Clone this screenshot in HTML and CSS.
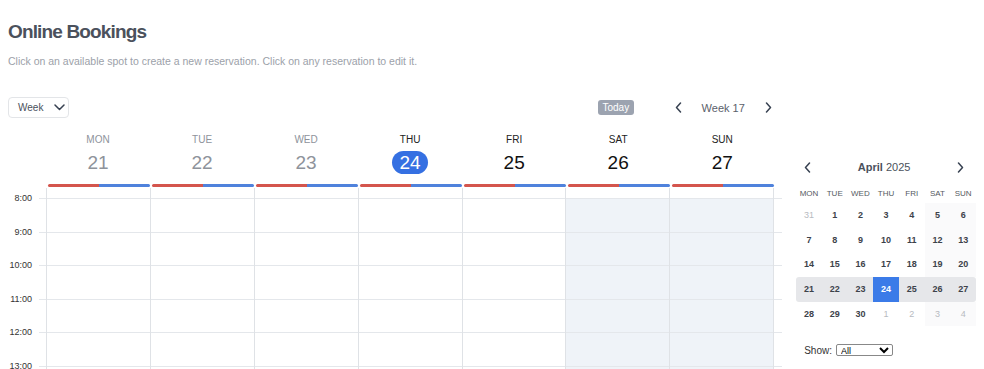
FILE: index.html
```html
<!doctype html>
<html>
<head>
  <link rel="stylesheet" href="styles.css">
</head>
<body>
<div class="b-page">
  <h1 class="b-page_title">Online Bookings</h1>
  <p class="b-page_hint">Click on an available spot to create a new reservation. Click on any reservation to edit it.</p>

  <div class="b-main">
    <div class="b-week">
      <div class="b-toolbar">
        <div class="b-toolbar_view">
          Week
          <svg width="11" height="7" viewBox="0 0 11 7"><path d="M1 1l4.5 4.5L10 1" fill="none" stroke="#374151" stroke-width="1.5" stroke-linecap="round" stroke-linejoin="round"/></svg>
        </div>
        <div class="b-toolbar_nav">
          <span class="b-toolbar_today">Today</span>
          <span class="b-toolbar_arrow">
            <svg width="7" height="11" viewBox="0 0 7 11"><path d="M5.5 1L1.5 5.5l4 4.5" fill="none" stroke="#374151" stroke-width="1.5" stroke-linecap="round" stroke-linejoin="round"/></svg>
          </span>
          <span class="b-toolbar_label">Week 17</span>
          <span class="b-toolbar_arrow">
            <svg width="7" height="11" viewBox="0 0 7 11"><path d="M1.5 1l4 4.5-4 4.5" fill="none" stroke="#374151" stroke-width="1.5" stroke-linecap="round" stroke-linejoin="round"/></svg>
          </span>
        </div>
      </div>

      <div class="b-days">
        <div class="b-days_gutter"></div>
        <div class="b-day past"><span class="b-day_name">MON</span><span class="b-day_num">21</span><span class="b-day_bar"><i></i><i></i></span></div>
        <div class="b-day past"><span class="b-day_name">TUE</span><span class="b-day_num">22</span><span class="b-day_bar"><i></i><i></i></span></div>
        <div class="b-day past"><span class="b-day_name">WED</span><span class="b-day_num">23</span><span class="b-day_bar"><i></i><i></i></span></div>
        <div class="b-day today"><span class="b-day_name">THU</span><span class="b-day_num">24</span><span class="b-day_bar"><i></i><i></i></span></div>
        <div class="b-day"><span class="b-day_name">FRI</span><span class="b-day_num">25</span><span class="b-day_bar"><i></i><i></i></span></div>
        <div class="b-day"><span class="b-day_name">SAT</span><span class="b-day_num">26</span><span class="b-day_bar"><i></i><i></i></span></div>
        <div class="b-day"><span class="b-day_name">SUN</span><span class="b-day_num">27</span><span class="b-day_bar"><i></i><i></i></span></div>
        <div class="b-days_tail"></div>
      </div>

      <div class="b-grid">
        <div class="b-grid_times">
          <div>8:00</div><div>9:00</div><div>10:00</div><div>11:00</div><div>12:00</div><div>13:00</div>
        </div>
        <div class="b-grid_col"><div class="b-grid_top"></div><i></i><i></i><i></i><i></i><i></i><i></i></div>
        <div class="b-grid_col"><div class="b-grid_top"></div><i></i><i></i><i></i><i></i><i></i><i></i></div>
        <div class="b-grid_col"><div class="b-grid_top"></div><i></i><i></i><i></i><i></i><i></i><i></i></div>
        <div class="b-grid_col"><div class="b-grid_top"></div><i></i><i></i><i></i><i></i><i></i><i></i></div>
        <div class="b-grid_col"><div class="b-grid_top"></div><i></i><i></i><i></i><i></i><i></i><i></i></div>
        <div class="b-grid_col weekend"><div class="b-grid_top"></div><i></i><i></i><i></i><i></i><i></i><i></i></div>
        <div class="b-grid_col weekend"><div class="b-grid_top"></div><i></i><i></i><i></i><i></i><i></i><i></i></div>
        <div class="b-grid_col tail"><div class="b-grid_top"></div><i></i><i></i><i></i><i></i><i></i><i></i></div>
      </div>
    </div>

    <div class="b-side">
      <div class="b-mini_head">
        <svg width="7" height="11" viewBox="0 0 7 11"><path d="M5.5 1L1.5 5.5l4 4.5" fill="none" stroke="#374151" stroke-width="1.5" stroke-linecap="round" stroke-linejoin="round"/></svg>
        <span><b>April</b> 2025</span>
        <svg width="7" height="11" viewBox="0 0 7 11"><path d="M1.5 1l4 4.5-4 4.5" fill="none" stroke="#374151" stroke-width="1.5" stroke-linecap="round" stroke-linejoin="round"/></svg>
      </div>
      <div class="b-mini">
        <span class="wd">MON</span><span class="wd">TUE</span><span class="wd">WED</span><span class="wd">THU</span><span class="wd">FRI</span><span class="wd">SAT</span><span class="wd">SUN</span>

        <span class="out">31</span><span>1</span><span>2</span><span>3</span><span>4</span><span class="we">5</span><span class="we">6</span>
        <span>7</span><span>8</span><span>9</span><span>10</span><span>11</span><span class="we">12</span><span class="we">13</span>
        <span>14</span><span>15</span><span>16</span><span>17</span><span>18</span><span class="we">19</span><span class="we">20</span>
        <span class="cur first">21</span><span class="cur">22</span><span class="cur">23</span><span class="cur sel">24</span><span class="cur">25</span><span class="cur">26</span><span class="cur last">27</span>
        <span>28</span><span>29</span><span>30</span><span class="out">1</span><span class="out">2</span><span class="out we">3</span><span class="out we">4</span>
      </div>
      <div class="b-show">
        Show:
        <select>
          <option>All</option>
        </select>
      </div>
    </div>
  </div>
</div>
</body>
</html>
```

FILE: styles.css
```css
html, body {
  height : 369px;
  overflow : hidden;
}
body {
  margin : 0;
  background : #fff;
  font-family : "Liberation Sans", Arial, sans-serif;
  color : #111;
}
.b-page {
  padding : 0 8px;
}
.b-page_title {
  margin : 0;
  padding-top : 21px;
  font-size : 19px;
  line-height : 22px;
  letter-spacing : -0.85px;
  color : #4b515c;
}
.b-page_hint {
  margin : 11px 0 0;
  font-size : 10.5px;
  line-height : 14px;
  color : #9ca1a9;
}

.b-main {
  display : flex;
  margin-top : 29px;
}
.b-week {
  width : 775px;
}

/* toolbar */
.b-toolbar {
  display : flex;
  justify-content : space-between;
  align-items : center;
  height : 21px;
  padding-right : 8px;
}
.b-toolbar_view {
  display : flex;
  align-items : center;
  gap : 11px;
  box-sizing : border-box;
  width : 61px;
  height : 21px;
  padding-left : 9px;
  border : 1px solid #e3e5e8;
  border-radius : 4px;
  font-size : 10px;
  color : #4b515c;
}
.b-toolbar_nav {
  display : flex;
  align-items : center;
}
.b-toolbar_today {
  padding : 2px 5px;
  border-radius : 3px;
  background : #9ca3b0;
  color : #fff;
  font-size : 10px;
  line-height : 11px;
  margin-right : 38px;
}
.b-toolbar_arrow {
  display : flex;
  width : 12px;
  justify-content : center;
}
.b-toolbar_label {
  width : 78px;
  text-align : center;
  font-size : 11px;
  color : #5b616b;
}

/* day headers */
.b-days {
  display : flex;
  margin-top : 16px;
}
.b-days_gutter {
  width : 38px;
}
.b-days_tail {
  width : 8px;
}
.b-day {
  flex : 1;
  display : flex;
  flex-direction : column;
  align-items : center;
}
.b-day_name {
  font-size : 10px;
  line-height : 12px;
  color : #222;
}
.b-day_num {
  margin-top : 5px;
  min-width : 36px;
  height : 23px;
  line-height : 23px;
  border-radius : 12px;
  text-align : center;
  font-size : 19px;
  color : #111;
}
.b-day.past .b-day_name,
.b-day.past .b-day_num {
  color : #8e939b;
}
.b-day.today .b-day_num {
  background : #3570e2;
  color : #fff;
}
.b-day_bar {
  display : flex;
  align-self : stretch;
  margin : 10px 0 0 2px;
  height : 3px;
}
.b-day_bar i {
  flex : 1;
  background : #d4554d;
  border-radius : 2px 0 0 2px;
}
.b-day_bar i + i {
  background : #4f82dc;
  border-radius : 0 2px 2px 0;
}

/* hour grid */
.b-grid {
  display : flex;
  margin-top : 1px;
  height : 182px;
  overflow : hidden;
}
.b-grid_times {
  width : 38px;
  padding-top : 3px;
  flex : none;
}
.b-grid_times div {
  position : relative;
  height : 33.6px;
  padding-right : 14px;
  text-align : right;
  font-size : 9px;
  line-height : 14px;
  color : #333;
}
.b-grid_times div::after {
  content : '';
  position : absolute;
  top : 7px;
  right : 0;
  width : 7px;
  height : 1px;
  background : #e4e7eb;
}
.b-grid_col {
  flex : 1;
  border-left : 1px solid #dfe2e6;
}
.b-grid_col.tail {
  flex : none;
  width : 8px;
}
.b-grid_top {
  height : 10px;
}
.b-grid_col i {
  display : block;
  box-sizing : border-box;
  height : 33.6px;
  border-top : 1px solid #e4e7eb;
}
.b-grid_col.weekend i {
  background : #eff3f8;
}

/* side calendar */
.b-side {
  width : 180px;
  margin-left : 14px;
  padding-top : 64px;
}
.b-mini_head {
  display : flex;
  justify-content : space-between;
  align-items : center;
  padding : 0 12px 0 8px;
  font-size : 11px;
  color : #4b515c;
}
.b-mini {
  display : grid;
  grid-template-columns : repeat(7, 1fr);
  grid-template-rows : 17.5px;
  grid-auto-rows : 24.75px;
  margin-top : 12px;
}
.b-mini span {
  display : flex;
  align-items : center;
  justify-content : center;
  font-size : 9px;
  font-weight : bold;
  color : #3d424a;
}
.b-mini span.wd {
  font-size : 8px;
  font-weight : normal;
  color : #555a62;
}
.b-mini span.we {
  background : #fafafb;
}
.b-mini span.out {
  font-weight : normal;
  color : #b7bbc1;
}
.b-mini span.cur {
  background : #e6e7ea;
}
.b-mini span.first {
  border-radius : 3px 0 0 3px;
}
.b-mini span.last {
  border-radius : 0 3px 3px 0;
}
.b-mini span.sel {
  background : #3b7be8;
  color : #fff;
}
.b-show {
  display : flex;
  align-items : center;
  gap : 4px;
  margin : 18px 0 0 8px;
  font-size : 10px;
  color : #333;
}
.b-show select {
  width : 57px;
  height : 12px;
  font-size : 9px;
  font-family : "Liberation Sans", Arial, sans-serif;
  color : #000;
  padding : 0;
  border : 1px solid #888;
  border-radius : 2px;
  background : #fff;
}
```
